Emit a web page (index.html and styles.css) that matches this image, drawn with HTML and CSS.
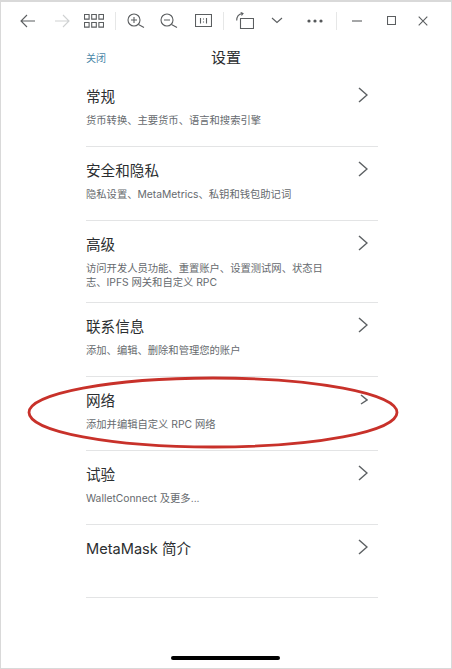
FILE: index.html
```html
<!DOCTYPE html>
<html lang="zh">
<head>
<meta charset="utf-8">
<title>设置</title>
<link rel="stylesheet" href="styles.css">
</head>
<body>
<div class="frame">
  <div class="toolbar">
    <span class="cell c34"><svg width="16" height="14" viewBox="0 0 16 14" class="ico"><path d="M15 7H1M7 1L1 7l6 6"/></svg></span>
    <span class="cell c34"><svg width="16" height="14" viewBox="0 0 16 14" class="ico off"><path d="M1 7h14M9 1l6 6-6 6"/></svg></span>
    <span class="cell c30"><svg width="20" height="14" viewBox="0 0 20 14" class="ico"><path d="M.5.5h4.6v4.6H.5zM7.7.5h4.6v4.6H7.7zM14.9.5h4.6v4.6h-4.6zM.5 8.5h4.6v4.6H.5zM7.7 8.5h4.6v4.6H7.7zM14.9 8.5h4.6v4.6h-4.6z"/></svg></span>
    <span class="cell c12"><i class="sep"></i></span>
    <span class="cell c30"><svg width="18" height="16" viewBox="0 0 18 16" class="ico"><circle cx="7" cy="7" r="6"/><path d="M11.5 11.5L17 14.5M4 7h6M7 4v6"/></svg></span>
    <span class="cell c36"><svg width="18" height="16" viewBox="0 0 18 16" class="ico"><circle cx="7" cy="7" r="6"/><path d="M11.5 11.5L17 14.5M4 7h6"/></svg></span>
    <span class="cell c32"><svg width="17" height="13" viewBox="0 0 17 13" class="ico"><path d="M.5.5h16v12H.5zM5.5 4v5.5M11.5 4v5.5M8.5 4.5v1M8.5 7.5v1"/></svg></span>
    <span class="cell c8"><i class="sep"></i></span>
    <span class="cell c36"><svg width="18" height="18" viewBox="0 0 18 18" class="ico"><path d="M4.5 6.5h13v10h-13zM.7 8.5C.7 4.5 3 2 6.5 1.5M4.7 .5L7 1.5 5.5 3.5"/></svg></span>
    <span class="cell c28"><svg width="12" height="7" viewBox="0 0 12 7" class="ico"><path d="M1 1l5 4.5L11 1"/></svg></span>
    <span class="cell c3"></span>
    <span class="cell c42"><svg width="16" height="4" viewBox="0 0 16 4" class="dots"><circle cx="2" cy="2" r="1.6"/><circle cx="8" cy="2" r="1.6"/><circle cx="14" cy="2" r="1.6"/></svg></span>
    <span class="cell c1"><i class="sep"></i></span>
    <span class="cell c40"><svg width="10" height="2" viewBox="0 0 10 2" class="ico"><path d="M0 1h10"/></svg></span>
    <span class="cell c28"><svg width="9" height="9" viewBox="0 0 9 9" class="ico"><path d="M.5.5h8v8h-8z"/></svg></span>
    <span class="cell c36"><svg width="10" height="10" viewBox="0 0 10 10" class="ico"><path d="M.7.7l8.6 8.6M9.3.7L.7 9.3"/></svg></span>
  </div>

  <header class="head">
    <a class="close">关闭</a>
    <h1 class="title">设置</h1>
  </header>

  <main class="list">
    <section class="row">
      <div class="text">
        <h2 class="name">常规</h2>
        <p class="desc">货币转换、主要货币、语言和搜索引擎</p>
      </div>
      <svg class="chev" width="10" height="16" viewBox="0 0 10 16"><path d="M1 1l8 7-8 7"/></svg>
    </section>
    <section class="row">
      <div class="text">
        <h2 class="name">安全和隐私</h2>
        <p class="desc">隐私设置、MetaMetrics、私钥和钱包助记词</p>
      </div>
      <svg class="chev" width="10" height="16" viewBox="0 0 10 16"><path d="M1 1l8 7-8 7"/></svg>
    </section>
    <section class="row">
      <div class="text">
        <h2 class="name">高级</h2>
        <p class="desc">访问开发人员功能、重置账户、设置测试网、状态日志、IPFS 网关和自定义 RPC</p>
      </div>
      <svg class="chev" width="10" height="16" viewBox="0 0 10 16"><path d="M1 1l8 7-8 7"/></svg>
    </section>
    <section class="row">
      <div class="text">
        <h2 class="name">联系信息</h2>
        <p class="desc">添加、编辑、删除和管理您的账户</p>
      </div>
      <svg class="chev" width="10" height="16" viewBox="0 0 10 16"><path d="M1 1l8 7-8 7"/></svg>
    </section>
    <section class="row">
      <div class="text">
        <h2 class="name">网络</h2>
        <p class="desc">添加并编辑自定义 RPC 网络</p>
      </div>
      <svg class="chev" width="10" height="16" viewBox="0 0 10 16"><path d="M3 4l6 5-6 4"/></svg>
    </section>
    <section class="row">
      <div class="text">
        <h2 class="name">试验</h2>
        <p class="desc">WalletConnect 及更多...</p>
      </div>
      <svg class="chev" width="10" height="16" viewBox="0 0 10 16"><path d="M1 1l8 7-8 7"/></svg>
    </section>
    <section class="row">
      <div class="text">
        <h2 class="name">MetaMask 简介</h2>
      </div>
      <svg class="chev" width="10" height="16" viewBox="0 0 10 16"><path d="M1 1l8 7-8 7"/></svg>
    </section>
  </main>

  <div class="home"></div>

  <svg class="ring" width="452" height="669" viewBox="0 0 452 669"><ellipse cx="213" cy="412.5" rx="184" ry="34.5"/></svg>
</div>
</body>
</html>
```

FILE: styles.css
```css
* { box-sizing: border-box; }
html, body { margin: 0; padding: 0; background: #fff; }
body {
  width: 452px;
  height: 669px;
  overflow: hidden;
  font-family: Inter, "Noto Sans CJK SC", sans-serif;
}
.frame {
  position: relative;
  width: 452px;
  height: 669px;
  display: flex;
  flex-direction: column;
  border: 1px solid #d9d9d9;
  border-top-width: 2px;
  background: #fff;
  color: #24272a;
}
.toolbar {
  display: flex;
  height: 37px;
  padding-left: 10px;
  align-items: center;
}
.cell { display: flex; align-items: center; justify-content: center; height: 100%; flex: none; }
.c1 { width: 1px; } .c3 { width: 3px; } .c8 { width: 8px; } .c12 { width: 12px; }
.c28 { width: 28px; } .c30 { width: 30px; } .c32 { width: 32px; } .c34 { width: 34px; }
.c36 { width: 36px; } .c40 { width: 40px; } .c42 { width: 42px; }
.ico { fill: none; stroke: #5b5e60; stroke-width: 1.1; display: block; }
.ico.off { stroke: #cfd1d2; }
.dots { fill: #55585a; display: block; }
.sep { display: block; width: 1px; height: 18px; background: #e6e7e7; }

.head {
  position: relative;
  height: 34px;
  padding-top: 3px;
  margin-left: 85px;
  width: 280px;
  display: flex;
  align-items: center;
  justify-content: center;
}
.close {
  position: absolute;
  left: 0;
  top: 12px;
  font-size: 10px;
  line-height: 14px;
  color: #4a87a8;
}
.title {
  margin: 0;
  font-size: 15px;
  font-weight: 400;
  line-height: 20px;
  color: #2b2e30;
}

.list { margin-left: 85px; width: 292px; }
.row {
  display: flex;
  justify-content: space-between;
  align-items: flex-start;
  min-height: 74px;
  padding: 14px 10px 13px 0;
  border-bottom: 1px solid #e3e4e5;
}
.row:last-child { min-height: 73px; }
.text { width: 250px; }
.name {
  margin: 0;
  font-size: 14.6px;
  font-weight: 400;
  line-height: 20px;
  color: #2b2e30;
}
.desc {
  margin: 6px 0 0;
  font-size: 10.3px;
  line-height: 14px;
  color: #666a6e;
}
.chev { fill: none; stroke: #5d6164; stroke-width: 1.5; flex: none; }

.home {
  position: absolute;
  left: 170px;
  bottom: 8px;
  width: 109px;
  height: 4px;
  border-radius: 2px;
  background: #000;
}
.ring {
  position: absolute;
  left: -1px;
  top: -2px;
  pointer-events: none;
}
.ring ellipse { fill: none; stroke: #c8312a; stroke-width: 2.8; }
```
